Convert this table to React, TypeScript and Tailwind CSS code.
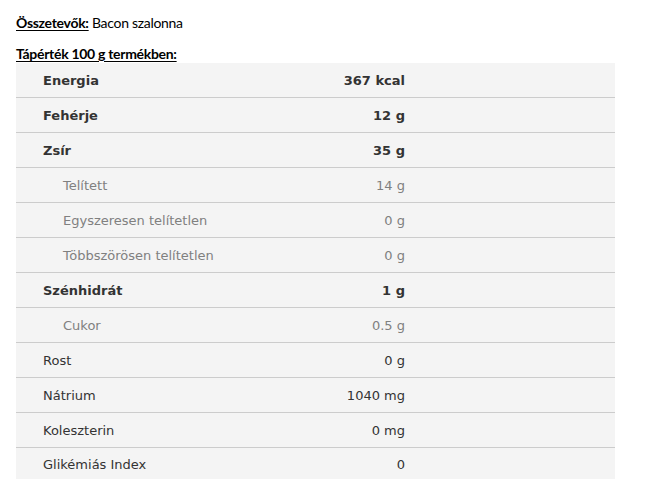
const rows = [
  { name: "Energia", value: "367 kcal", kind: "bold" },
  { name: "Fehérje", value: "12 g", kind: "bold" },
  { name: "Zsír", value: "35 g", kind: "bold" },
  { name: "Telített", value: "14 g", kind: "sub" },
  { name: "Egyszeresen telítetlen", value: "0 g", kind: "sub" },
  { name: "Többszörösen telítetlen", value: "0 g", kind: "sub" },
  { name: "Szénhidrát", value: "1 g", kind: "bold" },
  { name: "Cukor", value: "0.5 g", kind: "sub" },
  { name: "Rost", value: "0 g", kind: "plain" },
  { name: "Nátrium", value: "1040 mg", kind: "plain" },
  { name: "Koleszterin", value: "0 mg", kind: "plain" },
  { name: "Glikémiás Index", value: "0", kind: "plain" },
];

const App = () => {
  return (
    <div className="bg-white w-[666px] h-[490px] pl-4 pt-[14px]">
      <p className="font-['Lato',sans-serif] text-[14px] tracking-[-0.3px] leading-[18px] text-black">
        <span className="font-bold underline underline-offset-2">Összetevők:</span> Bacon szalonna
      </p>
      <p className="font-['Lato',sans-serif] text-[14px] tracking-[-0.3px] leading-[18px] text-black font-bold underline underline-offset-2 mt-[13px]">
        Tápérték 100 g termékben:
      </p>
      <div className="w-[599px] bg-[#f4f4f4] font-['DejaVu_Sans',sans-serif] text-[13px]">
        {rows.map((row, i) => (
          <div
            key={row.name}
            className={`flex items-center pt-[2px] ${i === rows.length - 1 ? "h-[31px]" : "h-[35px] border-b border-[#cccccc]"} ${
              row.kind === "bold"
                ? "font-bold text-[#333333]"
                : row.kind === "sub"
                ? "text-[#808080]"
                : "text-[#333333]"
            }`}
          >
            <div className={`w-[290px] ${row.kind === "sub" ? "pl-[47px]" : "pl-[27px]"}`}>{row.name}</div>
            <div className="w-[99px] text-right">{row.value}</div>
          </div>
        ))}
      </div>
    </div>
  );
};

export default App;
